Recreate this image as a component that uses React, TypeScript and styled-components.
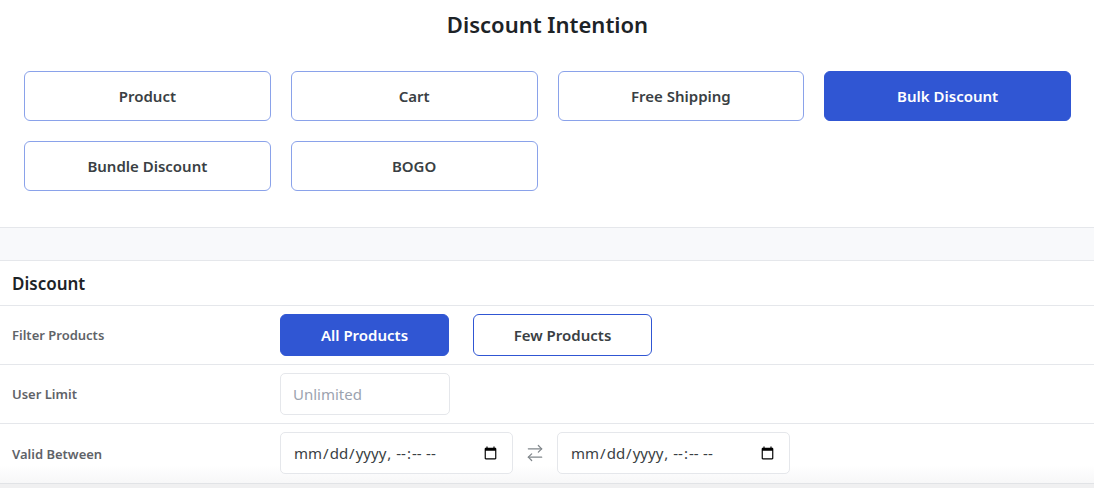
import { createGlobalStyle } from "styled-components";
import styled from "styled-components";
import { ArrowRightLeft } from "lucide-react";

const GlobalStyle = createGlobalStyle`
  body {
    margin: 0;
    background-color: #f0f0f1;
    font-family: "Noto Sans", "Open Sans", sans-serif;
    color: #1d2327;
  }
  * {
    box-sizing: border-box;
  }
`;

const IntentSection = styled.section`
  background-color: #fff;
  padding: 8px 23px 36px 24px;
  border-bottom: 1px solid #e5e7eb;
`;

const Title = styled.h2`
  margin: 0 0 31px;
  text-align: center;
  font-size: 22px;
  font-weight: 600;
  line-height: 32px;
  color: #1d2327;
`;

const IntentGrid = styled.div`
  display: grid;
  grid-template-columns: repeat(4, 1fr);
  gap: 20px;
`;

const IntentButton = styled.button<{ $active?: boolean }>`
  height: 50px;
  border-radius: 6px;
  border: 1px solid ${(p) => (p.$active ? "#3056d3" : "#8aa2ea")};
  background-color: ${(p) => (p.$active ? "#3056d3" : "#fff")};
  color: ${(p) => (p.$active ? "#fff" : "#3a3f44")};
  font-family: inherit;
  font-size: 15px;
  font-weight: 600;
  cursor: pointer;
`;

const Spacer = styled.div`
  height: 33px;
  background-color: #f8f9fb;
  border-bottom: 1px solid #e5e7eb;
`;

const Card = styled.div`
  background-color: #fff;
  border-bottom: 1px solid #e1e3e6;
`;

const CardHeader = styled.div`
  height: 45px;
  display: flex;
  align-items: center;
  padding: 0 12px;
  font-size: 17px;
  font-weight: 600;
  color: #1d2327;
  border-bottom: 1px solid #e5e7eb;
`;

const Row = styled.div<{ $last?: boolean }>`
  display: grid;
  grid-template-columns: 280px 1fr;
  align-items: center;
  height: 59px;
  border-bottom: ${(p) => (p.$last ? "none" : "1px solid #e5e7eb")};
  background: ${(p) =>
    p.$last ? "linear-gradient(#fff 70%, #f7f7f8 100%)" : "#fff"};
`;

const Label = styled.div`
  padding-left: 12px;
  font-size: 13px;
  font-weight: 600;
  color: #5f6368;
`;

const Controls = styled.div`
  display: flex;
  align-items: center;
  gap: 24px;
`;

const ChoiceButton = styled.button<{ $active?: boolean }>`
  height: 42px;
  width: ${(p) => (p.$active ? "169px" : "179px")};
  border-radius: 6px;
  border: 1px solid #3056d3;
  background-color: ${(p) => (p.$active ? "#3056d3" : "#fff")};
  color: ${(p) => (p.$active ? "#fff" : "#3a3f44")};
  font-family: inherit;
  font-size: 15px;
  font-weight: 600;
  cursor: pointer;
`;

const TextInput = styled.input`
  width: 170px;
  height: 42px;
  border: 1px solid #e5e7eb;
  border-radius: 5px;
  padding: 0 12px;
  font-family: inherit;
  font-size: 15px;
  color: #3a3f44;
  outline: none;
  &::placeholder {
    color: #9ca3af;
  }
`;

const DateGroup = styled.div`
  display: flex;
  align-items: center;
  gap: 12px;
  margin-top: -1px;
`;

const DateInput = styled.input`
  width: 233px;
  height: 42px;
  border: 1px solid #e5e7eb;
  border-radius: 5px;
  padding: 0 12px;
  font-family: inherit;
  font-size: 15px;
  color: #3a3f44;
  background-color: #fff;
  outline: none;
`;

const SwapIcon = styled.span`
  display: flex;
  color: #80868b;
`;

const intents = [
  "Product",
  "Cart",
  "Free Shipping",
  "Bulk Discount",
  "Bundle Discount",
  "BOGO",
];

export default function App() {
  return (
    <>
      <GlobalStyle />
      <IntentSection>
        <Title>Discount Intention</Title>
        <IntentGrid>
          {intents.map((name) => (
            <IntentButton key={name} $active={name === "Bulk Discount"}>
              {name}
            </IntentButton>
          ))}
        </IntentGrid>
      </IntentSection>
      <Spacer />
      <Card>
        <CardHeader>Discount</CardHeader>
        <Row>
          <Label>Filter Products</Label>
          <Controls>
            <ChoiceButton $active>All Products</ChoiceButton>
            <ChoiceButton>Few Products</ChoiceButton>
          </Controls>
        </Row>
        <Row>
          <Label>User Limit</Label>
          <Controls>
            <TextInput type="text" placeholder="Unlimited" />
          </Controls>
        </Row>
        <Row $last>
          <Label>Valid Between</Label>
          <DateGroup>
            <DateInput type="datetime-local" />
            <SwapIcon>
              <ArrowRightLeft size={20} strokeWidth={1.5} />
            </SwapIcon>
            <DateInput type="datetime-local" />
          </DateGroup>
        </Row>
      </Card>
    </>
  );
}
